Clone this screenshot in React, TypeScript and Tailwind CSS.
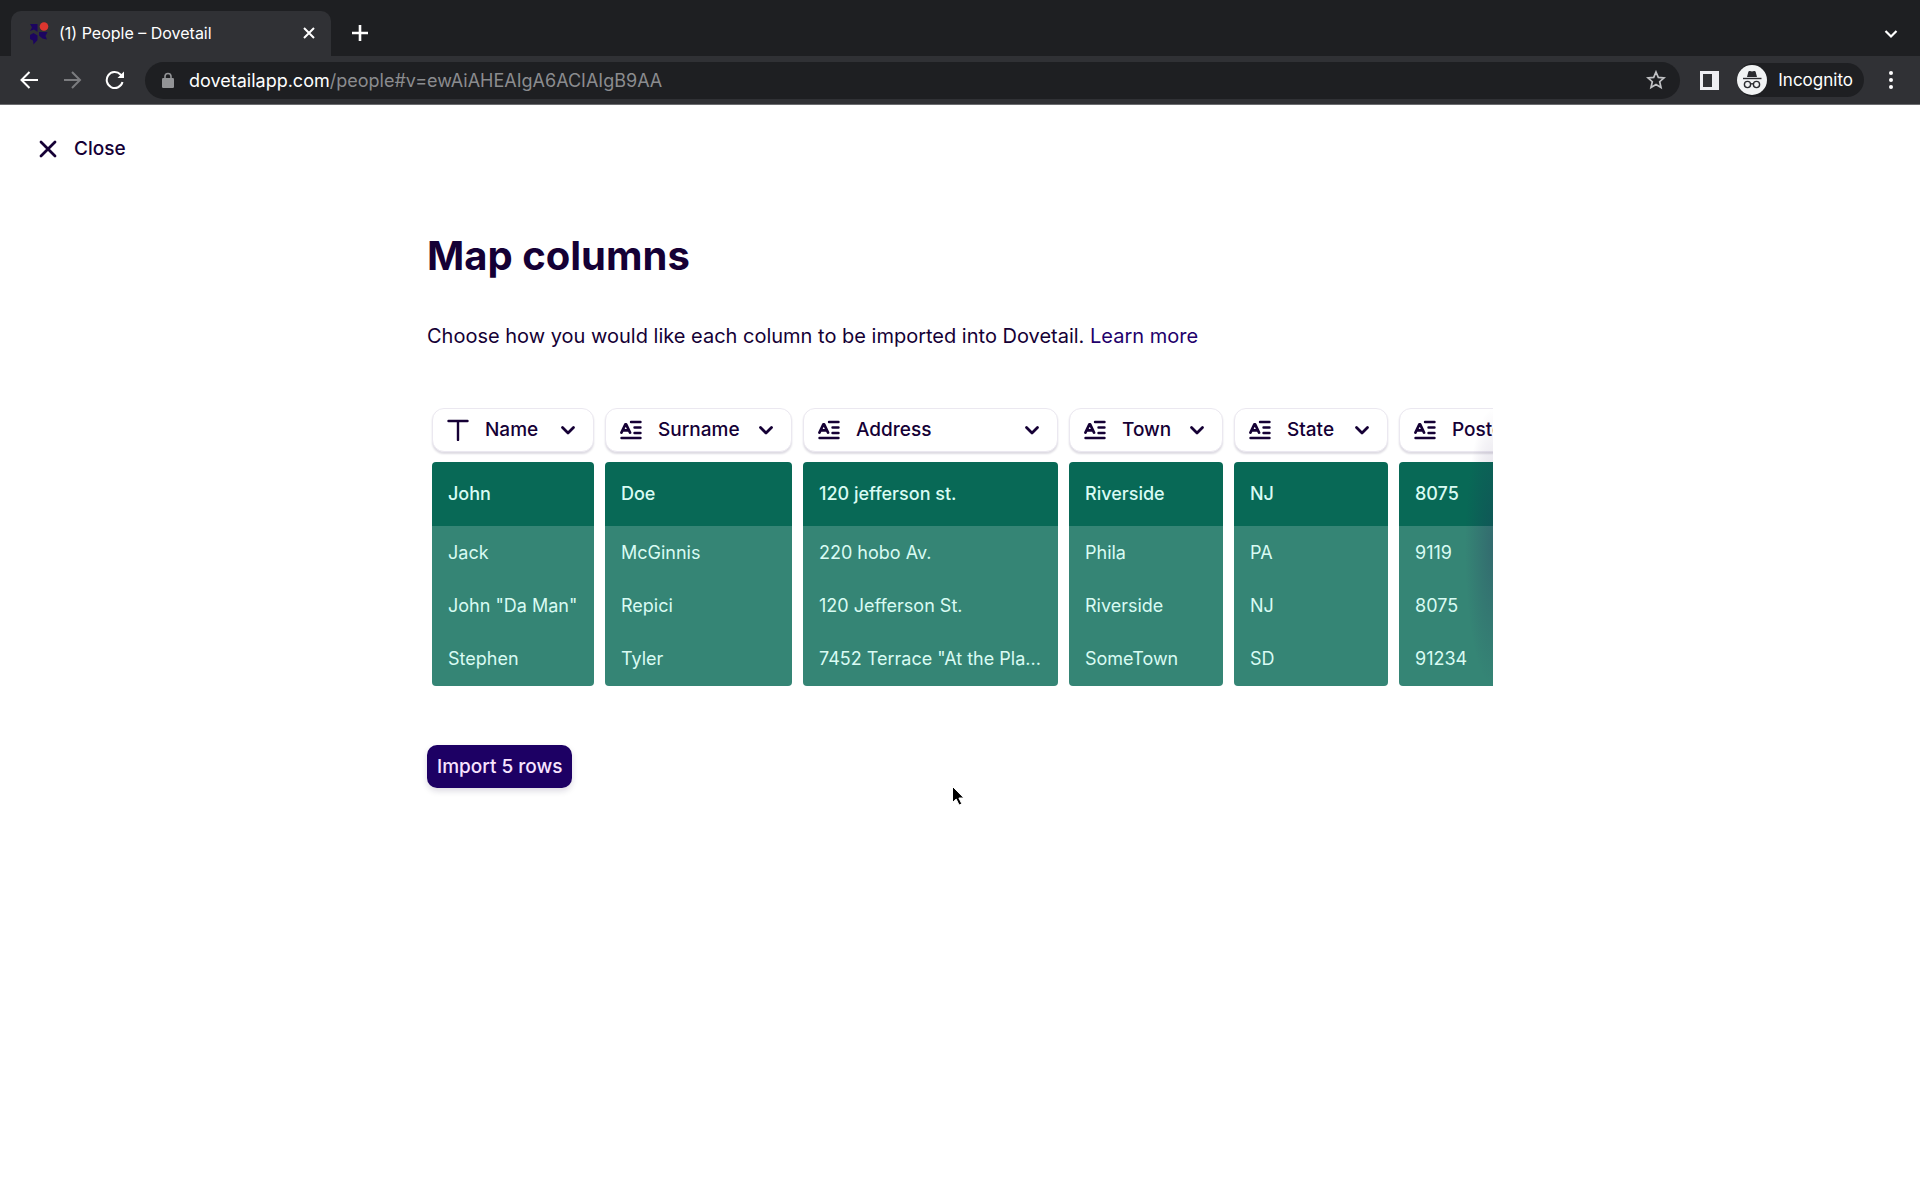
import type { ReactNode } from "react";

type Column = {
  name: string;
  kind: "title" | "text";
  width: string;
  options: string[];
  cells: string[];
};

const columns: Column[] = [
  {
    name: "Name",
    kind: "title",
    width: "w-[173px]",
    options: ["Name"],
    cells: ["John", "Jack", 'John "Da Man"', "Stephen"],
  },
  {
    name: "Surname",
    kind: "text",
    width: "w-[198px]",
    options: ["Surname"],
    cells: ["Doe", "McGinnis", "Repici", "Tyler"],
  },
  {
    name: "Address",
    kind: "text",
    width: "w-[266px]",
    options: ["Address"],
    cells: [
      "120 jefferson st.",
      "220 hobo Av.",
      "120 Jefferson St.",
      '7452 Terrace "At the Pla...',
    ],
  },
  {
    name: "Town",
    kind: "text",
    width: "w-[165px]",
    options: ["Town"],
    cells: ["Riverside", "Phila", "Riverside", "SomeTown"],
  },
  {
    name: "State",
    kind: "text",
    width: "w-[165px]",
    options: ["State"],
    cells: ["NJ", "PA", "NJ", "SD"],
  },
  {
    name: "Postcode",
    kind: "text",
    width: "w-[205px]",
    options: ["Postcode"],
    cells: ["8075", "9119", "8075", "91234"],
  },
];

function Icon({
  className,
  viewBox = "0 0 24 24",
  strokeWidth = 2,
  children,
}: {
  className: string;
  viewBox?: string;
  strokeWidth?: number;
  children: ReactNode;
}) {
  return (
    <svg
      aria-hidden="true"
      viewBox={viewBox}
      className={className}
      fill="none"
      stroke="currentColor"
      strokeWidth={strokeWidth}
    >
      {children}
    </svg>
  );
}

function Favicon() {
  return (
    <svg aria-hidden="true" viewBox="0 0 20 24" className="h-6 w-5 shrink-0">
      <g fill="#1c0560">
        <path d="M1 3h7.500v8L5 8.500 1 10l2-3.500z" />
        <path d="M1 14l3.500-2 4 2.500V19l-4 4.500-.5-4L1 18z" />
        <path d="M10 11h8.500l-2 4 1.500 3.500-4.500-1-3.500-3z" />
      </g>
      <circle cx="15" cy="5.500" r="4.300" fill="#dc362f" />
    </svg>
  );
}

function IncognitoBadge() {
  return (
    <svg aria-hidden="true" viewBox="0 0 30 30" className="size-[30px] shrink-0">
      <circle cx="15" cy="15" r="15" fill="#f1f3f4" />
      <path
        d="M10 12l1.300-5q.4-1.300 1.700-.9l2 .5 2-.5q1.300-.4 1.700.9L20 12z"
        fill="#2a2b2f"
      />
      <path d="M6 12.800h18.500v1.400H6z" fill="#2a2b2f" />
      <g fill="none" stroke="#2a2b2f" strokeWidth="1.400">
        <circle cx="10.500" cy="19.500" r="3.100" />
        <circle cx="19.500" cy="19.500" r="3.100" />
        <path d="M13.500 19.200q1.500-1.200 3 0" />
      </g>
    </svg>
  );
}

function BrowserChrome() {
  return (
    <header className="border-b border-[#6b6c6f] bg-[#303135] text-white">
      <div className="flex h-14 items-end bg-[#1e1f22] pl-[11px]">
        <div className="flex h-[45px] w-80 items-center rounded-t-[10px] bg-[#303135] pr-[14px] pb-[2px] pl-[18px]">
          <Favicon />
          <span className="ml-[10px] flex-1 text-[16px] leading-6">
            (1) People – Dovetail
          </span>
          <button type="button" aria-label="Close tab">
            <Icon className="size-4" viewBox="0 0 16 16">
              <path d="M3 3l10 10M13 3L3 13" />
            </Icon>
          </button>
        </div>
        <button type="button" aria-label="New tab" className="mb-[14px] ml-5">
          <Icon className="size-[18px]" viewBox="0 0 18 18" strokeWidth={2.6}>
            <path d="M9 1v16M1 9h16" />
          </Icon>
        </button>
        <button
          type="button"
          aria-label="Search tabs"
          className="mr-[21px] mb-[14px] ml-auto"
        >
          <Icon className="size-4" viewBox="0 0 16 16" strokeWidth={2.2}>
            <path d="M2.500 5L8 10.500 13.500 5" />
          </Icon>
        </button>
      </div>

      <div className="flex h-12 items-center pr-[26px] pl-5">
        <button type="button" aria-label="Back">
          <Icon className="size-5" viewBox="0 0 20 20">
            <path d="M18 10H2M9.500 2l-8 8 8 8" />
          </Icon>
        </button>
        <button type="button" aria-label="Forward" className="ml-6 text-[#7b7c7f]">
          <Icon className="size-5" viewBox="0 0 20 20">
            <path d="M0 10h16M8 2l8 8-8 8" />
          </Icon>
        </button>
        <button type="button" aria-label="Reload" className="ml-[21px]">
          <Icon className="size-5" viewBox="0 0 20 20">
            <path d="M17.500 12a8 8 0 1 1-2-7.500l2 2" />
            <path d="M19 1.500V8h-6.500z" fill="currentColor" stroke="none" />
          </Icon>
        </button>
        <div className="ml-5 flex h-[37px] flex-1 items-center rounded-full bg-[#1e1f22] pr-[14px] pl-[17px]">
          <svg
            aria-hidden="true"
            viewBox="0 0 12 16"
            className="h-4 w-3 shrink-0 text-[#939497]"
          >
            <rect y="6" width="12" height="10" rx="1.200" fill="currentColor" />
            <path
              d="M3 7V4.500a3 3 0 0 1 6 0V7"
              fill="none"
              stroke="currentColor"
              strokeWidth="1.600"
            />
          </svg>
          <div
            role="textbox"
            aria-label="Address"
            tabIndex={0}
            className="ml-[15px] flex-1 pt-px text-[18px] leading-6 text-[#8b8c8f]"
          >
            <span className="text-white">dovetailapp.com</span>
            /people#v=ewAiAHEAIgA6ACIAIgB9AA
          </div>
          <button type="button" aria-label="Bookmark" className="text-[#c0c1c4]">
            <Icon className="size-5" viewBox="0 0 20 20" strokeWidth={1.7}>
              <path d="M10 2l2.300 5.400 5.700.5-4.300 3.800 1.300 5.700-5-3-5 3 1.300-5.700L2 7.900l5.700-.5z" />
            </Icon>
          </button>
        </div>
        <button type="button" aria-label="Side panel" className="ml-5 text-[#eeeef2]">
          <svg viewBox="0 0 19 19" className="size-[19px]">
            <path
              fillRule="evenodd"
              fill="currentColor"
              d="M0 0h19v19H0zM3 3v13h9V3z"
            />
          </svg>
        </button>
        <button
          type="button"
          className="ml-[18px] flex h-[34px] items-center rounded-full bg-[#1e1f22] pr-[11px] text-[17px] leading-6"
        >
          <IncognitoBadge />
          <span className="ml-[11px]">Incognito</span>
        </button>
        <button type="button" aria-label="Menu" className="ml-6">
          <svg viewBox="0 0 6 18" className="h-[18px] w-[6px]" fill="currentColor">
            <circle cx="3" cy="2" r="2" />
            <circle cx="3" cy="9" r="2" />
            <circle cx="3" cy="16" r="2" />
          </svg>
        </button>
      </div>
    </header>
  );
}

function KindIcon({ kind }: { kind: Column["kind"] }) {
  if (kind === "title") {
    return (
      <Icon className="size-[22px]" viewBox="0 0 22 22" strokeWidth={2.4}>
        <path d="M1.500 2h19M11 2v19" strokeLinecap="round" />
      </Icon>
    );
  }
  return (
    <Icon className="size-[22px]" viewBox="0 0 22 22" strokeWidth={2.4}>
      <path
        d="M1.500 13.500L5.300 5.500h.9l3.800 8M3 11.300h5.500"
        strokeWidth={2.8}
        strokeLinecap="round"
        strokeLinejoin="round"
      />
      <path
        d="M11 3h9.500M14.500 8.500h6M14.500 14h6M1.500 19h19"
        strokeLinecap="round"
      />
    </Icon>
  );
}

function ColumnSelect({ column }: { column: Column }) {
  return (
    <div className="relative h-11 rounded-xl border border-[#ebe8f0] bg-white shadow-[0_2px_2px_rgba(20,0,60,0.14)]">
      <span className="pointer-events-none absolute top-[10px] left-[14px]">
        <KindIcon kind={column.kind} />
      </span>
      <select
        aria-label={`Import ${column.name} as`}
        defaultValue={column.name}
        className="size-full appearance-none rounded-xl bg-transparent pl-[52px] text-[19px] font-medium outline-none"
      >
        {column.options.map((o) => (
          <option key={o}>{o}</option>
        ))}
      </select>
      <span className="pointer-events-none absolute top-[13px] right-[17px]">
        <Icon className="size-4" viewBox="0 0 16 16" strokeWidth={2.8}>
          <path
            d="M2.500 5.500L8 11l5.500-5.500"
            strokeLinecap="round"
            strokeLinejoin="round"
          />
        </Icon>
      </span>
    </div>
  );
}

function MappingTable() {
  return (
    <div className="relative mt-14 overflow-hidden pl-[5px]">
      <table className="w-[1172px] table-fixed border-separate border-spacing-0 text-left">
        <thead>
          <tr>
            {columns.map((c) => (
              <th key={c.name} scope="col" className={`${c.width} pr-[11px] pb-[10px]`}>
                <ColumnSelect column={c} />
              </th>
            ))}
          </tr>
        </thead>
        <tbody className="text-[18px] leading-6 text-[#d9fbf3]">
          {[0, 1, 2, 3].map((row) => (
            <tr key={row}>
              {columns.map((c) => (
                <td key={c.name} className="pr-[11px]">
                  <div
                    className={
                      row === 0
                        ? "rounded-t bg-[#086956] px-4 py-5 font-medium whitespace-nowrap"
                        : row === 3
                          ? "rounded-b bg-[#358575] px-4 py-[15px] whitespace-nowrap"
                          : "bg-[#358575] px-4 pt-[15px] pb-[14px] whitespace-nowrap"
                    }
                  >
                    {c.cells[row]}
                  </div>
                </td>
              ))}
            </tr>
          ))}
        </tbody>
      </table>
      {/* scroll hint on the clipped edge */}
      <div className="pointer-events-none absolute inset-y-0 right-0 w-7 bg-[radial-gradient(farthest-side_at_100%_50%,rgba(44,24,90,0.24),transparent)]" />
    </div>
  );
}

export default function App() {
  return (
    <div className="relative min-h-screen bg-white font-[Inter,sans-serif] text-[#150035]">
      <BrowserChrome />

      <div className="flex px-[39px] pt-7">
        <button
          type="button"
          className="flex items-center gap-[17px] text-[19px] leading-8 font-medium"
        >
          <Icon className="size-[18px]" viewBox="0 0 18 18" strokeWidth={2.8}>
            <path d="M2 2l14 14M16 2L2 16" strokeLinecap="round" />
          </Icon>
          Close
        </button>
      </div>

      <main className="mx-auto max-w-[1066px] pt-[63px]">
        <h1 className="text-[40px] leading-14 font-bold">Map columns</h1>
        <p className="mt-9 text-[20px] leading-8">
          Choose how you would like each column to be imported into Dovetail.{" "}
          <a href="#learn-more" className="text-[#22006b]">
            Learn more
          </a>
        </p>
        <MappingTable />
        <button
          type="button"
          className="mt-[59px] h-[43px] rounded-[10px] bg-[#1d0064] px-[10px] pt-px text-[19px] font-medium text-[#f8e4ff] shadow-[0_3px_6px_rgba(20,0,60,0.15)]"
        >
          Import 5 rows
        </button>
      </main>

      {/* mouse pointer */}
      <svg
        aria-hidden="true"
        viewBox="0 0 14 22"
        className="pointer-events-none absolute top-[785px] left-[951px] h-[22px] w-[14px]"
      >
        <path
          d="M1.500 1.500v16l3.700-3.400 2.900 6 2.700-1.300-2.900-5.800h5z"
          fill="#000"
          stroke="#fff"
          strokeWidth="1"
        />
      </svg>
    </div>
  );
}
